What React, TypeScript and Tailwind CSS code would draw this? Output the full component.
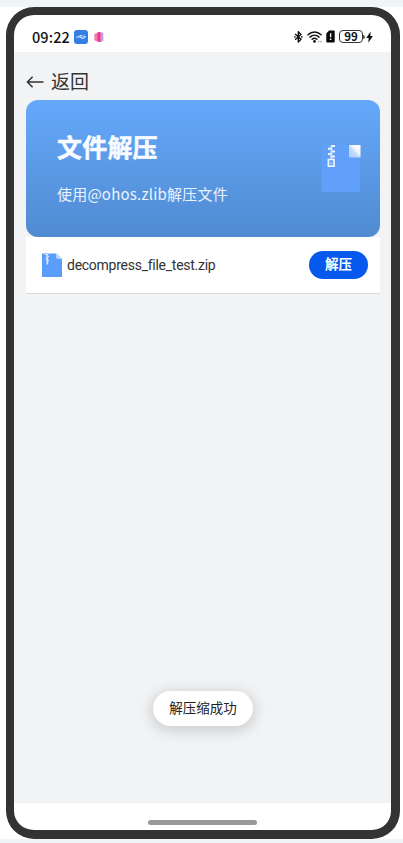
function BluetoothIcon() {
  return (
    <svg width="9" height="14" viewBox="0 0 9 14" fill="none" stroke="#111" strokeWidth="1.4" strokeLinejoin="round">
      <path d="M1.1 4 7 9.3 4.3 12V1.8L7 4.5 1.1 9.8" />
      <path d="M0.2 7h1.4M7 7h1.5" />
    </svg>
  );
}

function WifiIcon() {
  return (
    <svg width="16" height="14" viewBox="0 0 16 14" fill="none" stroke="#111" strokeWidth="1.5" strokeLinecap="round">
      <path d="M1 4.7C4.8 1 10.4 1 14 4.7M3 7.1c2.6-2.5 6.4-2.5 9 0M5.1 9.3c1.4-1.3 3.4-1.3 4.8 0" />
      <circle cx="7.5" cy="11.4" r="1.4" fill="#111" stroke="none" />
      <path d="M11.7 11.2v.8M13.9 11.2v.8" stroke="#777" strokeWidth="0.9" />
    </svg>
  );
}

function SimIcon() {
  return (
    <svg width="9" height="13" viewBox="0 0 9 13">
      <path d="M3.2.5H7.7a1 1 0 0 1 1 1v10a1 1 0 0 1-1 1H1.3a1 1 0 0 1-1-1V3.4Z" fill="#080808" />
      <path d="M4.6 3.2v4.1M4.6 8.6v1.5" stroke="#fff" strokeWidth="1.4" />
    </svg>
  );
}

function BackArrow() {
  return (
    <svg width="18" height="14" viewBox="0 0 18 14" fill="none" stroke="#333" strokeWidth="1.5">
      <path d="M17.5 7H1.5M6.6 1.8 1.4 7l5.2 5.2" />
    </svg>
  );
}

function BannerFile() {
  return (
    <svg width="40" height="48" viewBox="0 0 40 48">
      <defs>
        <linearGradient id="fold" x1="1" y1="0" x2="0" y2="1">
          <stop offset="0" stopColor="#fff" />
          <stop offset="0.4" stopColor="#f0f6fe" />
          <stop offset="0.55" stopColor="#c3dcfd" />
          <stop offset="1" stopColor="#aacdfc" />
        </linearGradient>
      </defs>
      <path d="M.5 0H39v47H.5Z" fill="#609ffa" />
      <path d="M28 0H39.5v12.5H28Z" fill="url(#fold)" />
      <path d="M10 1h4M7 3.8h4M10 6.4h4M7 9h4M9.5 11.5H14" fill="none" stroke="#eef6ff" strokeWidth="2" />
      <path d="M10.5 0v14" fill="none" stroke="#cfe2fe" strokeWidth="1.8" />
      <path d="M7.4 14.5h5.6v6.7H7.4Z" fill="none" stroke="#edf5ff" strokeWidth="1.7" />
      <path d="M9 18.2h2.4" stroke="#d8e8ff" />
    </svg>
  );
}

function ZipFile() {
  return (
    <svg width="20" height="24" viewBox="0 0 20 24">
      <path d="M0 .5h14l6 5.5v18H0Z" fill="#5b9dfa" />
      <path d="M14 .5h1.5L20 5v1Z" fill="#dcebff" />
      <path d="M14 .5V4a2 2 0 0 0 2 2h4Z" fill="#b6d4fd" />
      <path d="M3 1.5h2.5M4.5 3.5H7M3.5 5.5H6M4.5 7.5H7" stroke="#e5f1ff" strokeWidth="1.2" />
      <path d="M5.3 1v10.5" stroke="#cfe3ff" strokeWidth="1.8" />
    </svg>
  );
}

export default function App() {
  return (
    <main className="h-[843px] w-[403px] overflow-hidden border-b-4 border-t-[7px] border-[#f0f5f5] bg-white pl-[6px] font-['Roboto','Noto_Sans_CJK_SC',sans-serif]">
      <div className="flex h-[832px] w-[394px] flex-col overflow-hidden rounded-[28px] border-8 border-b-[9px] border-r-[9px] border-[#333333] bg-white">
        <header className="flex h-[37px] shrink-0 items-center justify-between pl-[18px] pr-[18px] pt-[6px]">
          <div className="flex items-center">
            <span className="w-[38px] whitespace-nowrap font-['Noto_Sans_CJK_SC',sans-serif] text-[14.5px] font-medium leading-5 tracking-[0.1px] text-[#111]">09:22</span>
            <span className="ml-[4px] flex size-[14px] items-center justify-center rounded-[3px] bg-[#347fe5]">
              <svg width="10" height="6" viewBox="0 0 10 6" fill="none" stroke="#d9eaff" strokeWidth="0.9">
                <path d="M0 3h9.5M2 3l2-1.5h2M4 3l2 1.5h1M7.5 1.5 9.5 3l-2 1.5" />
              </svg>
            </span>
            <svg className="ml-[6px]" width="10" height="12" viewBox="0 0 10 12">
              <path d="M.3 3 3 2v8.5L.3 9.3Z" fill="#f07cb2" />
              <path d="M3.2 1.5 6.7.8v10.4l-3.5-.8Z" fill="#e83488" />
              <path d="M7 1.5h1.3a1 1 0 0 1 1 1v6.9a1 1 0 0 1-1 1H7Z" fill="#b79af0" />
            </svg>
          </div>
          <div className="flex items-center">
            <BluetoothIcon />
            <span className="ml-[4px]"><WifiIcon /></span>
            <span className="ml-[3px]"><SimIcon /></span>
            <span className="ml-[4px] flex h-[13px] w-[24px] items-center justify-center rounded-[4px] border border-[#333] pt-px font-['Noto_Sans_CJK_SC',sans-serif] text-[11.5px] font-bold leading-none text-[#111]">99</span>
            <span className="h-[4px] w-[2px] rounded-r bg-[#555]" />
            <svg className="ml-px" width="7" height="12" viewBox="0 0 7 12">
              <path d="M4.7.4.2 7h2.5l-.4 4.7L6.9 5H4.3Z" fill="#111" />
            </svg>
          </div>
        </header>
        <section className="flex h-[751px] shrink-0 flex-col bg-[#f1f3f5] pl-[12px] pr-[11px]">
          <button className="flex h-[48px] shrink-0 items-center pt-[11px] text-[#333]">
            <BackArrow />
            <span className="-mt-[2px] ml-[7px] font-['Noto_Sans_CJK_SC',sans-serif] text-[19px] leading-6">返回</span>
          </button>
          <div className="flex h-[137px] shrink-0 items-center justify-between rounded-[12px] bg-linear-to-b from-[#65a8fb] to-[#508bd1] pl-[31px] pr-[19px] text-[#f8fbff]">
            <div className="font-['Noto_Sans_CJK_SC',sans-serif]">
              <h1 className="-mt-[4px] text-[25px] font-bold leading-[36px] tracking-[0.2px] [-webkit-text-stroke:0.5px_#f8fbff]">文件解压</h1>
              <p className="mt-[19px] whitespace-nowrap text-[15px] leading-[22px] tracking-[0.22px] text-[#eaf3fd]">使用@ohos.zlib解压文件</p>
            </div>
            <BannerFile />
          </div>
          <div className="flex h-[57px] shrink-0 items-center border-b border-[#d9dbdd] bg-white pb-px pl-[16px] pr-[12px]">
            <ZipFile />
            <span className="ml-[5px] whitespace-nowrap text-[14px] leading-5 tracking-[-0.26px] text-[#333]">decompress_file_test.zip</span>
            <button className="ml-auto flex h-[28px] w-[59px] items-center justify-center rounded-full bg-[#0758ed] pb-[2px] font-['Noto_Sans_CJK_SC',sans-serif] text-[13.5px] font-bold text-white">解压</button>
          </div>
          <div className="mb-[77px] mt-auto flex h-[35px] w-[100px] items-center justify-center self-center rounded-full bg-white pb-[2px] font-['Noto_Sans_CJK_SC',sans-serif] text-[13.5px] text-[#222] shadow-[0_3px_14px_2px_rgba(0,0,0,0.16)]">
            解压缩成功
          </div>
        </section>
        <footer className="flex flex-1 justify-center pt-[17px]">
          <span className="h-[5px] w-[109px] rounded-full bg-[#999]" />
        </footer>
      </div>
    </main>
  );
}
